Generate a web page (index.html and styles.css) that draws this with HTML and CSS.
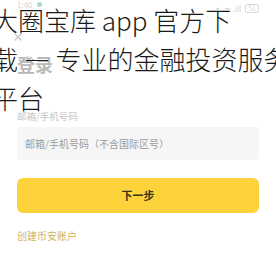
FILE: index.html
```html
<!DOCTYPE html>
<html lang="zh">
<head>
<meta charset="utf-8">
<link rel="stylesheet" href="styles.css">
</head>
<body>
<div class="page">
  <div class="app">
    <div class="status">
      <div class="status-left"><span class="time">1:40</span><span class="dot"></span></div>
      <div class="status-right"><span class="sig">▪ ᯤ .ıll</span><span class="batt">51</span></div>
    </div>
    <div class="close">
      <svg width="8" height="8" viewBox="0 0 8 8"><path d="M0.5 0.5L7.5 7.5M7.5 0.5L0.5 7.5" stroke="#c4c4c4" stroke-width="1.2" fill="none"/></svg>
    </div>
    <h1 class="heading">登录</h1>
    <div class="label">邮箱/手机号码</div>
    <div class="input">邮箱/手机号码（不含国际区号）</div>
    <div class="button">下一步</div>
    <div class="link">创建币安账户</div>
  </div>
  <div class="title">大圈宝库 app 官方下<br>载 — 专业的金融投资服务<br>平台</div>
</div>
</body>
</html>
```

FILE: styles.css
```css
html, body {
  margin: 0;
  padding: 0;
  background: #fff;
}
.page {
  position: relative;
  width: 276px;
  height: 256px;
  overflow: hidden;
  font-family: "Noto Sans CJK SC", "Noto Sans", sans-serif;
}
.app {
  padding: 0 17px;
}
.status {
  height: 16px;
  display: flex;
  justify-content: space-between;
  align-items: center;
  font-size: 8px;
  color: #d4d4d4;
}
.status-left {
  display: flex;
  align-items: center;
  gap: 4px;
  margin-top: -8px;
}
.dot {
  width: 5px;
  height: 5px;
  border-radius: 50%;
  background: #a8dcc4;
}
.status-right {
  display: flex;
  align-items: center;
  gap: 4px;
}
.batt {
  border: 1px solid #d8d8d8;
  border-radius: 2px;
  padding: 0 2px;
  line-height: 7px;
  font-size: 7px;
}
.close {
  margin-top: 17px;
  height: 8px;
  margin-left: -3px;
}
.close svg {
  display: block;
}
.heading {
  margin: 11px 0 0 0;
  height: 24px;
  font-size: 18px;
  line-height: 24px;
  font-weight: 700;
  color: #b9b9b9;
}
.label {
  margin-top: 34px;
  height: 12px;
  font-size: 9.5px;
  line-height: 12px;
  color: #c6c6c6;
}
.input {
  margin-top: 5px;
  height: 33px;
  background: #f6f6f6;
  border-radius: 4px;
  padding-left: 8px;
  font-size: 10px;
  line-height: 33px;
  color: #9c9c9c;
}
.button {
  margin-top: 18px;
  height: 35px;
  background: #fcd33a;
  border-radius: 6px;
  font-size: 11px;
  font-weight: 700;
  line-height: 35px;
  text-align: center;
  color: #3a3316;
}
.link {
  margin-top: 17px;
  height: 12px;
  font-size: 10px;
  line-height: 12px;
  color: #d2b35a;
}
.title {
  position: absolute;
  left: -8px;
  top: 0;
  font-size: 26px;
  font-weight: 300;
  line-height: 39px;
  white-space: nowrap;
  color: #1a1a1a;
}
```
